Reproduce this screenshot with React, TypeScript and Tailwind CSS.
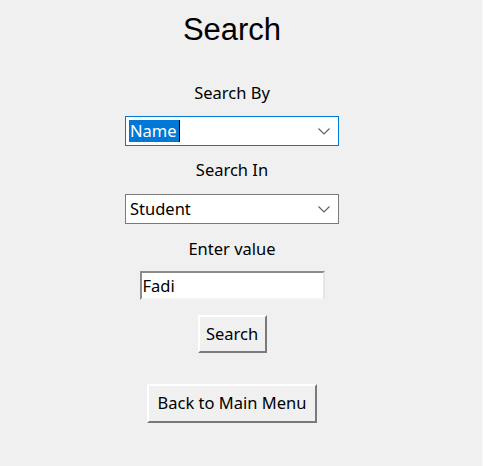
import { useState } from 'react';

const labelFont = { fontFamily: '"Noto Sans", "Open Sans", sans-serif' };

function Chevron() {
  return (
    <svg width="12" height="7" viewBox="0 0 12 7" className="shrink-0">
      <path d="M0.5 0.5 L6 6 L11.5 0.5" fill="none" stroke="#5f5f5f" strokeWidth="1.1" />
    </svg>
  );
}

export default function App() {
  const [searchIn] = useState('Student');
  const [value, setValue] = useState('Fadi');

  return (
    <div
      className="w-[483px] h-[466px] bg-[#f0f0f0] border-r border-[#f9f9f9] text-black overflow-hidden"
      style={labelFont}
    >
      <div className="w-[464px] flex flex-col items-center">
        {/* Title */}
        <h1
          className="mt-[12px] h-[36px] leading-[36px] text-[31px]"
          style={{ fontFamily: '"Liberation Sans", Arial, sans-serif' }}
        >
          Search
        </h1>

        <p className="mt-[35px] h-[20px] leading-[20px] text-[16.5px]">Search By</p>

        {/* Search By combobox (focused) */}
        <div className="mt-[13px] w-[214px] h-[30px] border border-[#0078d7] bg-white flex items-center pl-[3px] pr-[8px]">
          <div className="flex-1 flex items-center h-[28px]">
            <span className="inline-block h-[22px] leading-[22px] text-[16.5px] bg-[#0078d7] text-white pl-[1px] pr-[2px]">
              Name
            </span>
            <span className="inline-block w-px h-[22px] bg-black" />
          </div>
          <Chevron />
        </div>

        <p className="mt-[14px] h-[20px] leading-[20px] text-[16.5px]">Search In</p>

        {/* Search In combobox */}
        <div className="mt-[14px] w-[214px] h-[30px] border border-[#7a7a7a] bg-white flex items-center pl-[3px] pr-[8px]">
          <span className="flex-1 pl-px leading-[28px] text-[16.5px]">{searchIn}</span>
          <Chevron />
        </div>

        <p className="mt-[15px] h-[20px] leading-[20px] text-[16.5px]">Enter value</p>

        {/* Entry (sunken) */}
        <input
          value={value}
          onChange={e => setValue(e.target.value)}
          className="mt-[12px] w-[185px] h-[29px] bg-white border-2 border-t-[#8c8c8c] border-l-[#8c8c8c] border-b-[#f4f4f4] border-r-[#e6e6e6] px-[1px] text-[16.5px] outline-none"
          style={labelFont}
        />

        {/* Buttons (raised) */}
        <button
          className="mt-[15px] w-[69px] h-[38px] bg-[#f0f0f0] border-2 border-t-white border-l-white border-b-[#7a7a7a] border-r-[#7a7a7a] text-[16.5px] leading-none"
          style={labelFont}
        >
          Search
        </button>

        <button
          className="mt-[31px] w-[170px] h-[39px] bg-[#f0f0f0] border-2 border-t-white border-l-white border-b-[#7a7a7a] border-r-[#7a7a7a] text-[16.5px] leading-none"
          style={labelFont}
        >
          Back to Main Menu
        </button>
      </div>
    </div>
  );
}
